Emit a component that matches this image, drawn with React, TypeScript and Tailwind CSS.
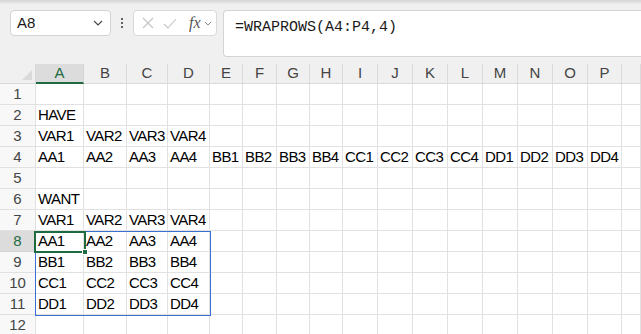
import React from 'react';

const COLS = ['A', 'B', 'C', 'D', 'E', 'F', 'G', 'H', 'I', 'J', 'K', 'L', 'M', 'N', 'O', 'P', ''];

const DATA: Record<number, string[]> = {
  2: ['HAVE'],
  3: ['VAR1', 'VAR2', 'VAR3', 'VAR4'],
  4: ['AA1', 'AA2', 'AA3', 'AA4', 'BB1', 'BB2', 'BB3', 'BB4', 'CC1', 'CC2', 'CC3', 'CC4', 'DD1', 'DD2', 'DD3', 'DD4'],
  6: ['WANT'],
  7: ['VAR1', 'VAR2', 'VAR3', 'VAR4'],
  8: ['AA1', 'AA2', 'AA3', 'AA4'],
  9: ['BB1', 'BB2', 'BB3', 'BB4'],
  10: ['CC1', 'CC2', 'CC3', 'CC4'],
  11: ['DD1', 'DD2', 'DD3', 'DD4'],
};

const ROWS = [1, 2, 3, 4, 5, 6, 7, 8, 9, 10, 11, 12];

function Chevron({ className }: { className?: string }) {
  return (
    <svg viewBox="0 0 10 6" className={className} fill="none" stroke="currentColor" strokeWidth="1.1">
      <path d="M1 1l4 4 4-4" />
    </svg>
  );
}

function Toolbar() {
  return (
    <div className="h-[64px] bg-[#f0f0f0] flex flex-col">
      <div className="h-[4px] bg-gradient-to-b from-[#d6d6d6] to-[#ececec]" />
      <div className="flex items-start pt-[6px] pl-[10px]">
        <div className="w-[101px] h-[26px] bg-white border border-[#d4d4d4] rounded-[4px] flex items-center justify-between pl-[6px] pr-[7px]">
          <span className="text-[15px] text-[#1a1a1a]">A8</span>
          <Chevron className="w-[10px] h-[6px] text-[#444]" />
        </div>
        <div className="w-[22px] h-[26px] flex flex-col items-center justify-center gap-[2px]">
          <span className="w-[2px] h-[2px] bg-[#333] rounded-full" />
          <span className="w-[2px] h-[2px] bg-[#333] rounded-full" />
          <span className="w-[2px] h-[2px] bg-[#333] rounded-full" />
        </div>
        <div className="w-[84px] h-[26px] bg-white border border-[#d9d9d9] rounded-[4px] flex items-center pl-[8px]">
          <svg viewBox="0 0 12 12" className="w-[12px] h-[12px] text-[#c4c4c4]" fill="none" stroke="currentColor" strokeWidth="1.1">
            <path d="M1 1l10 10M11 1L1 11" />
          </svg>
          <svg viewBox="0 0 14 11" className="w-[14px] h-[11px] ml-[9px] text-[#c4c4c4]" fill="none" stroke="currentColor" strokeWidth="1.1">
            <path d="M1 6l4 4 8-9" />
          </svg>
          <span className="ml-[12px] italic text-[16px] leading-none text-[#555]" style={{ fontFamily: '"Liberation Serif", serif' }}>
            fx
          </span>
          <Chevron className="ml-[3px] w-[8px] h-[5px] text-[#777]" />
        </div>
        <div className="ml-[6px] flex-1 h-[47px] bg-white border border-r-0 border-[#d4d4d4] rounded-l-[4px] pl-[11px] pt-[3px]">
          <span className="text-[15px] text-[#1a1a1a]" style={{ fontFamily: '"Liberation Mono", monospace' }}>
            =WRAPROWS(A4:P4,4)
          </span>
        </div>
      </div>
    </div>
  );
}

function Grid() {
  return (
    <div className="relative">
      <div className="grid grid-cols-[36px_48px_43px_41px_42px_33px_34px_33px_33px_35px_35px_35px_35px_35px_35px_35px_34px_1fr] grid-rows-[20px_repeat(12,21px)]">
        <div className="bg-[#f0f0f0] border-r border-b border-[#d9d9d9] relative">
          <svg viewBox="0 0 10 10" className="absolute right-[3px] bottom-[3px] w-[10px] h-[10px]">
            <path d="M10 0L10 10L0 10Z" fill="#dadada" />
          </svg>
        </div>
        {COLS.map((c, i) => (
          <div
            key={'h' + i}
            className={
              i === 0
                ? 'bg-[#dcdcdc] border-b-2 border-b-[#1e6b41] border-r border-r-[#d4d4d4] flex items-center justify-center text-[15px] text-[#1e6b41]'
                : 'bg-[#f0f0f0] border-b border-r border-[#dadada] flex items-center justify-center text-[15px] text-[#444]'
            }
          >
            {c}
          </div>
        ))}
        {ROWS.map((r) => (
          <React.Fragment key={r}>
            <div
              className={
                r === 8
                  ? 'bg-[#dcdcdc] border-r border-b border-[#d4d4d4] flex items-end justify-center pb-[1px] text-[15px] leading-[18px] text-[#1e6b41]'
                  : 'bg-[#f8f8f8] border-r border-b border-[#e1e1e1] flex items-end justify-center pb-[1px] text-[15px] leading-[18px] text-[#444]'
              }
            >
              {r}
            </div>
            {COLS.map((_, i) => (
              <div
                key={i}
                className="border-r border-b border-[#e1e1e1] flex items-end pl-[2px] pb-[1px] text-[15px] leading-[18px] text-black whitespace-nowrap overflow-visible tracking-[-0.6px]"
              >
                {DATA[r]?.[i] ?? ''}
              </div>
            ))}
          </React.Fragment>
        ))}
      </div>
      {/* spill range A8:D11 */}
      <div className="absolute left-[35px] top-[167px] w-[176px] h-[85px] border border-[#3a6fd3] pointer-events-none" />
      {/* active cell A8 */}
      <div className="absolute left-[34px] top-[167px] w-[52px] h-[22px] border-2 border-[#1e6b41] pointer-events-none" />
      <div className="absolute left-[82px] top-[185px] w-[6px] h-[6px] bg-[#1e6b41] border border-white pointer-events-none" />
    </div>
  );
}

export default function App() {
  return (
    <div className="w-[641px] h-[334px] overflow-hidden bg-white" style={{ fontFamily: '"Liberation Sans Narrow", "Liberation Sans", Arial, sans-serif' }}>
      <Toolbar />
      <Grid />
    </div>
  );
}
